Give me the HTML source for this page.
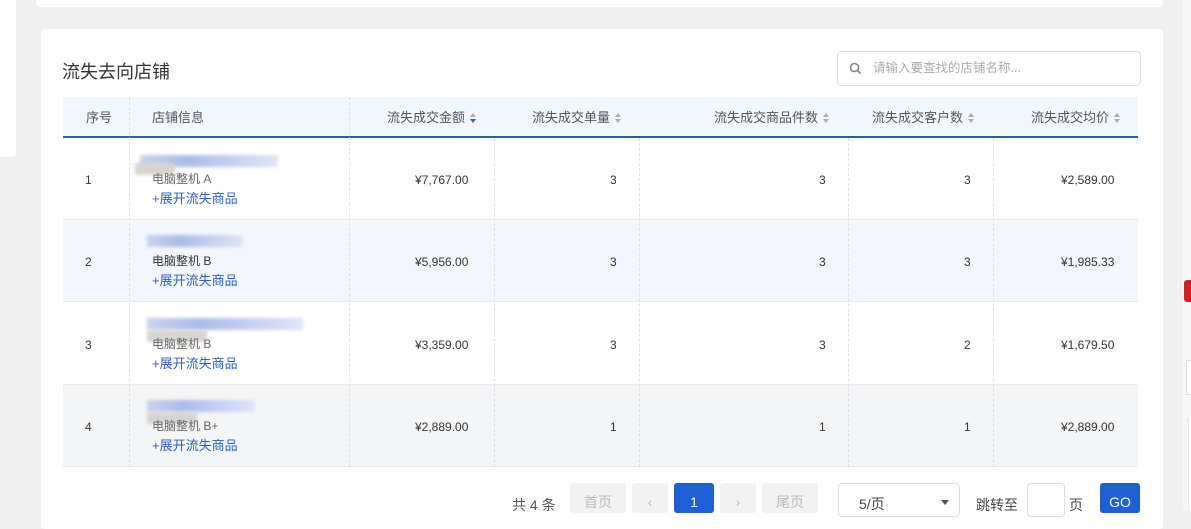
<!DOCTYPE html>
<html><head><meta charset="utf-8"><style>
*{margin:0;padding:0;box-sizing:border-box}
body{width:1191px;height:511px;overflow:hidden;background:#f0f0f0;font-family:"Liberation Sans","Noto Sans CJK SC",sans-serif;color:#333;position:relative;font-size:12px}
.abs{position:absolute}
.card{background:#fff;border-radius:4px}
.th{position:absolute;top:97px;height:41px;line-height:41px;font-size:13px;color:#555}
.sort{display:inline-block;width:7px;height:10px;vertical-align:-1px;margin-left:5px;position:relative}
.sort:before{content:"";position:absolute;left:0;top:0;border:3.5px solid transparent;border-bottom:4px solid #aab;border-top:0}
.sort:after{content:"";position:absolute;left:0;top:6px;border:3.5px solid transparent;border-top:4px solid #aab;border-bottom:0}
.sort.a:after{border-top-color:#2b5fc4}
.vl{position:absolute;top:97px;height:370px;border-left:1px dashed #dde}
.row{position:absolute;left:63px;width:1075px;border-bottom:1px solid #e8e8e8}
.c{position:absolute;font-size:12px;color:#333}
.link{color:#2b5fc4;font-size:13px}
.blur{position:absolute;height:12px;filter:blur(1.5px);background:linear-gradient(90deg,#c8d3f0,#a9bde8,#c5d0f2,#dfe5f7)}
.btn{position:absolute;top:483px;height:30px;border-radius:3px;background:#f2f2f2;color:#bbb;text-align:center;line-height:38px;font-size:14px}
</style></head><body>
<div class="abs card" style="left:-5px;top:-5px;width:21px;height:162px"></div>
<div class="abs card" style="left:36px;top:-5px;width:1127px;height:12px"></div>
<div class="abs" style="left:1183px;top:0;width:8px;height:511px;background:#f6f6f6"></div>
<div class="abs" style="left:1184px;top:280px;width:10px;height:22px;background:#d81e1e;border-radius:3px"></div>
<div class="abs" style="left:1186px;top:360px;width:8px;height:35px;border:1px solid #ddd;background:#fff"></div>
<div class="abs" style="left:1188px;top:418px;width:6px;height:93px;background:#fff;border-left:1px solid #e5e5e5"></div>
<div class="abs card" style="left:41px;top:29px;width:1122px;height:500px"></div>
<div class="abs" style="left:62px;top:58px;font-size:18px;color:#333">流失去向店铺</div>
<div class="abs" style="left:837px;top:51px;width:304px;height:35px;border:1px solid #ddd;border-radius:4px;color:#aaa;font-size:12.5px;line-height:33px;padding-left:35px">请输入要查找的店铺名称...
<svg class="abs" style="left:11px;top:10px" width="13" height="13" viewBox="0 0 13 13"><circle cx="5.5" cy="5.5" r="4" fill="none" stroke="#888" stroke-width="1.6"/><path d="M8.5 8.5L11.5 11.5" stroke="#888" stroke-width="1.6"/></svg></div>
<div class="abs" style="left:63px;top:97px;width:1075px;height:41px;background:#f2f6fd;border-bottom:2px solid #2b5f9e"></div>
<div class="th" style="left:86px">序号</div>
<div class="th" style="left:152px">店铺信息</div>
<div class="th" style="left:387px">流失成交金额<span class="sort a"></span></div>
<div class="th" style="left:532px">流失成交单量<span class="sort"></span></div>
<div class="th" style="left:714px">流失成交商品件数<span class="sort"></span></div>
<div class="th" style="left:872px">流失成交客户数<span class="sort"></span></div>
<div class="th" style="left:1031px">流失成交均价<span class="sort"></span></div>

<div class="row" style="top:138px;height:82px;background:#fff"></div>
<div class="row" style="top:220px;height:82px;background:#f3f7fd"></div>
<div class="row" style="top:302px;height:83px;background:#fff"></div>
<div class="row" style="top:385px;height:82px;background:#f4f5f7"></div>

<div class="vl" style="left:129px"></div><div class="vl" style="left:349px"></div>
<div class="vl" style="left:494px;top:138px;height:329px"></div><div class="vl" style="left:639px;top:138px;height:329px"></div>
<div class="vl" style="left:848px;top:138px;height:329px"></div><div class="vl" style="left:993px;top:138px;height:329px"></div>

<div class="c" style="left:85px;top:173px">1</div>
<div class="blur" style="left:140px;top:155px;width:138px"></div>
<div class="blur" style="left:135px;top:163px;width:40px;background:#d8d4d0"></div>
<div class="c" style="left:152px;top:170px;color:#666">电脑整机 A</div>
<div class="c link" style="left:152px;top:188px">+展开流失商品</div>
<div class="c" style="left:415px;top:173px">¥7,767.00</div>
<div class="c" style="left:610px;top:173px">3</div>
<div class="c" style="left:819px;top:173px">3</div>
<div class="c" style="left:964px;top:173px">3</div>
<div class="c" style="left:1061px;top:173px">¥2,589.00</div>

<div class="c" style="left:85px;top:255px">2</div>
<div class="blur" style="left:147px;top:235px;width:96px"></div>
<div class="c" style="left:152px;top:252px">电脑整机 B</div>
<div class="c link" style="left:152px;top:270px">+展开流失商品</div>
<div class="c" style="left:415px;top:255px">¥5,956.00</div>
<div class="c" style="left:610px;top:255px">3</div>
<div class="c" style="left:819px;top:255px">3</div>
<div class="c" style="left:964px;top:255px">3</div>
<div class="c" style="left:1061px;top:255px">¥1,985.33</div>

<div class="c" style="left:85px;top:338px">3</div>
<div class="blur" style="left:147px;top:318px;width:156px"></div>
<div class="blur" style="left:147px;top:330px;width:60px;background:#d8d4d0"></div>
<div class="c" style="left:152px;top:335px;color:#666">电脑整机 B</div>
<div class="c link" style="left:152px;top:353px">+展开流失商品</div>
<div class="c" style="left:415px;top:338px">¥3,359.00</div>
<div class="c" style="left:610px;top:338px">3</div>
<div class="c" style="left:819px;top:338px">3</div>
<div class="c" style="left:964px;top:338px">2</div>
<div class="c" style="left:1061px;top:338px">¥1,679.50</div>

<div class="c" style="left:85px;top:420px">4</div>
<div class="blur" style="left:147px;top:400px;width:108px"></div>
<div class="blur" style="left:147px;top:412px;width:50px;background:#d8d4d0"></div>
<div class="c" style="left:152px;top:417px;color:#666">电脑整机 B+</div>
<div class="c link" style="left:152px;top:435px">+展开流失商品</div>
<div class="c" style="left:415px;top:420px">¥2,889.00</div>
<div class="c" style="left:610px;top:420px">1</div>
<div class="c" style="left:819px;top:420px">1</div>
<div class="c" style="left:964px;top:420px">1</div>
<div class="c" style="left:1061px;top:420px">¥2,889.00</div>

<div class="abs" style="left:512px;top:495px;font-size:14px;color:#555">共 4 条</div>
<div class="btn" style="left:570px;width:56px">首页</div>
<div class="btn" style="left:632px;width:36px">‹</div>
<div class="btn" style="left:674px;width:40px;background:#1f5fd6;color:#fff">1</div>
<div class="btn" style="left:720px;width:36px">›</div>
<div class="btn" style="left:762px;width:56px">尾页</div>
<div class="abs" style="left:838px;top:483px;width:122px;height:34px;border:1px solid #ddd;border-radius:4px;font-size:14px;line-height:40px;padding-left:20px;color:#444">5/页<span style="position:absolute;right:10px;top:16px;border:4px solid transparent;border-top:5px solid #555"></span></div>
<div class="abs" style="left:976px;top:495px;font-size:14px;color:#444">跳转至</div>
<div class="abs" style="left:1027px;top:483px;width:38px;height:34px;border:1px solid #ddd;border-radius:4px"></div>
<div class="abs" style="left:1069px;top:495px;font-size:14px;color:#444">页</div>
<div class="btn" style="left:1100px;width:40px;background:#1f5fd6;color:#fff">GO</div>
</body></html>
